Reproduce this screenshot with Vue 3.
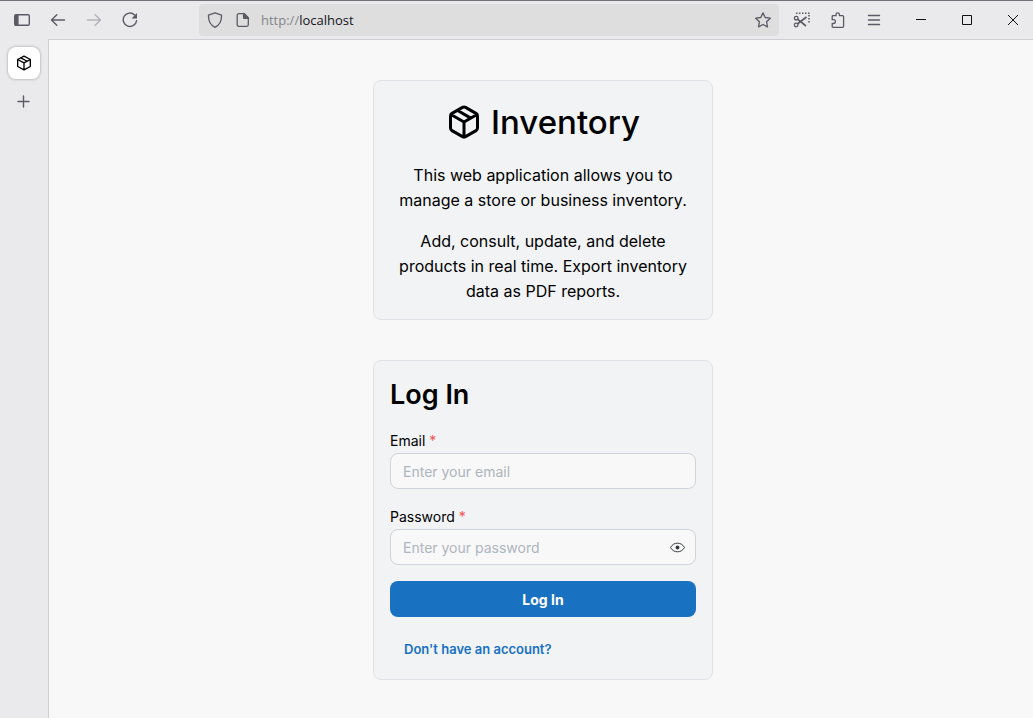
<script setup>
import { ref } from 'vue'

const email = ref('')
const password = ref('')
const showPassword = ref(false)
</script>

<template>
  <div class="browser">
    <header class="toolbar">
      <nav class="nav" aria-label="Navigation">
        <button type="button" class="tool" aria-label="Sidebar">
          <svg width="16" height="16" viewBox="0 0 16 16" fill="none" stroke="currentColor" stroke-width="1.4">
            <rect x=".7" y="2.7" width="14.6" height="10.6" rx="1.2" />
            <path d="M1 3h3.600v10H1z" fill="currentColor" stroke="none" />
          </svg>
        </button>
        <button type="button" class="tool" aria-label="Back">
          <svg width="16" height="16" viewBox="0 0 16 16" fill="none" stroke="currentColor" stroke-width="1.4" stroke-linecap="round" stroke-linejoin="round">
            <path d="M14.5 8h-13M6.8 2.7 1.5 8l5.3 5.3" />
          </svg>
        </button>
        <button type="button" class="tool" aria-label="Forward" disabled>
          <svg width="16" height="16" viewBox="0 0 16 16" fill="none" stroke="currentColor" stroke-width="1.4" stroke-linecap="round" stroke-linejoin="round">
            <path d="M1.5 8h13M9.2 2.7 14.5 8l-5.3 5.3" />
          </svg>
        </button>
        <button type="button" class="tool" aria-label="Reload">
          <svg width="16" height="16" viewBox="0 0 16 16" fill="none" stroke="currentColor" stroke-width="1.4" stroke-linecap="round">
            <path d="M14.6 8.6A6.7 6.7 0 1 1 12.6 2.9" />
            <path d="M15 1v5.500H9.500z" fill="currentColor" stroke="none" />
          </svg>
        </button>
      </nav>

      <div class="address">
        <svg width="16" height="16" viewBox="0 0 16 16" fill="none" stroke="currentColor" stroke-width="1.3" stroke-linejoin="round">
          <path d="M8 .8 1.5 3.200C1.300 8.500 3 12.800 8 15.300c5-2.500 6.700-6.800 6.500-12.100z" />
        </svg>
        <svg class="page-icon" width="16" height="16" viewBox="0 0 16 16" fill="none" stroke="currentColor" stroke-width="1.3" stroke-linejoin="round">
          <path d="M3.700 1.700h5.600l4 4v7.100a1.500 1.500 0 0 1-1.500 1.500H3.700a1.500 1.500 0 0 1-1.500-1.500V3.200a1.500 1.500 0 0 1 1.500-1.500z" />
          <path d="M8.600 1.500v4.800h4.900z" fill="currentColor" />
        </svg>
        <span class="url"><span class="scheme">http://</span>localhost</span>
        <button type="button" class="star" aria-label="Bookmark">
          <svg width="16" height="16" viewBox="0 0 16 16" fill="none" stroke="currentColor" stroke-width="1.3" stroke-linejoin="round">
            <path d="m8 .9 2.200 4.600 5.100.7-3.700 3.600.9 5.100L8 12.500l-4.500 2.400.9-5.100L.7 6.200l5.100-.7z" />
          </svg>
        </button>
      </div>

      <div class="extras">
        <button type="button" class="tool" aria-label="Screenshot">
          <svg width="18" height="16" viewBox="0 0 18 16" fill="none" stroke="currentColor" stroke-width="1.3">
            <path d="M3 1.200h13.500" stroke-width="1.6" stroke-dasharray="1.5 1.5" />
            <path d="M16 3v9" stroke-width="1.6" stroke-dasharray="1.5 1.5" />
            <circle cx="3.2" cy="6.2" r="1.8" />
            <circle cx="3.2" cy="13" r="1.8" />
            <path d="M4.600 7.200 13 14M4.600 11.800 13.500 5" stroke-width="1.7" />
          </svg>
        </button>
        <button type="button" class="tool" aria-label="Extensions">
          <svg width="16" height="16" viewBox="0 0 16 16" fill="none" stroke="currentColor" stroke-width="1.3" stroke-linejoin="round">
            <path d="M2.200 6V4.500a.8.800 0 0 1 .8-.8h3V2.500a1.700 1.700 0 0 1 3.400 0v1.200h3.200a1 1 0 0 1 1 1v9.600a1 1 0 0 1-1 1H3a.8.800 0 0 1-.8-.8v-3h1.300a1.900 1.900 0 0 0 0-3.800H2.200z" />
          </svg>
        </button>
        <button type="button" class="tool" aria-label="Menu">
          <svg width="16" height="16" viewBox="0 0 16 16" stroke="currentColor" stroke-width="1.4" stroke-linecap="round">
            <path d="M2.500 3.500h11M2.500 8h11M2.500 12.500h11" />
          </svg>
        </button>
      </div>

      <div class="window-controls">
        <button type="button" aria-label="Minimize">
          <svg width="12" height="12" viewBox="0 0 12 12" stroke="currentColor"><path d="M1 5.500h10" /></svg>
        </button>
        <button type="button" aria-label="Maximize">
          <svg width="12" height="12" viewBox="0 0 12 12" fill="none" stroke="currentColor"><path d="M1.500 1.500h9v9h-9z" /></svg>
        </button>
        <button type="button" aria-label="Close">
          <svg width="12" height="12" viewBox="0 0 12 12" stroke="currentColor"><path d="m1 1 10 10M11 1 1 11" /></svg>
        </button>
      </div>
    </header>

    <div class="body">
      <aside class="sidebar">
        <button type="button" class="tab" aria-label="Inventory">
          <svg width="16" height="16" viewBox="0 0 24 24" fill="none" stroke="currentColor" stroke-width="2" stroke-linecap="round" stroke-linejoin="round">
            <path d="M12 1.700 21.500 6.800v10.400L12 22.300l-9.500-5.100V6.800zM2.500 6.800l9.500 5.100 9.500-5.100M12 11.900v10.400M7.200 4.200l9.600 5.200" />
          </svg>
        </button>
        <button type="button" class="new-tab" aria-label="New tab">
          <svg width="16" height="16" viewBox="0 0 16 16" stroke="currentColor" stroke-width="1.4" stroke-linecap="round">
            <path d="M7.500 2v11M2 7.500h11" />
          </svg>
        </button>
      </aside>

      <main class="page">
        <section class="card intro">
          <h1>
            <svg width="36" height="36" viewBox="0 0 24 24" fill="none" stroke="currentColor" stroke-width="2" stroke-linecap="round" stroke-linejoin="round">
              <path d="m16.500 9.400-9-5.190M21 16V8a2 2 0 0 0-1-1.730l-7-4a2 2 0 0 0-2 0l-7 4A2 2 0 0 0 3 8v8a2 2 0 0 0 1 1.730l7 4a2 2 0 0 0 2 0l7-4A2 2 0 0 0 21 16zM3.270 6.960 12 12.010l8.730-5.050M12 22.080V12" />
            </svg>
            Inventory
          </h1>
          <p>This web application allows you to manage a store or business inventory.</p>
          <p>Add, consult, update, and delete products in real time. Export inventory data as PDF reports.</p>
        </section>

        <form class="card login" @submit.prevent>
          <h2>Log In</h2>
          <div class="field">
            <label for="email">Email <span class="required">*</span></label>
            <div class="control">
              <input id="email" v-model="email" type="email" placeholder="Enter your email" />
            </div>
          </div>
          <div class="field">
            <label for="password">Password <span class="required">*</span></label>
            <div class="control">
              <input id="password" v-model="password" :type="showPassword ? 'text' : 'password'" placeholder="Enter your password" />
              <button type="button" class="eye" aria-label="Show password" @click="showPassword = !showPassword">
                <svg width="15" height="15" viewBox="0 0 15 15" fill="none" stroke="currentColor">
                  <path d="M.5 7.500C2.200 4.600 4.500 3.200 7.500 3.200s5.300 1.400 7 4.300c-1.700 2.900-4 4.300-7 4.300S2.200 10.400.5 7.500z" />
                  <circle cx="7.5" cy="7.5" r="1.9" fill="currentColor" stroke="none" />
                </svg>
              </button>
            </div>
          </div>
          <button type="submit" class="submit">Log In</button>
          <a href="#" class="signup">Don't have an account?</a>
        </form>
      </main>
    </div>
  </div>
</template>

<style>
body {
  margin: 0;
}
</style>

<style scoped>
.browser {
  display: flex;
  flex-direction: column;
  min-height: 100vh;
  box-sizing: border-box;
  border-top: 1px solid #737177;
  background: #eaeaed;
  color: #000;
  font-family: Inter, "Liberation Sans", sans-serif;
}

button {
  display: flex;
  align-items: center;
  justify-content: center;
  padding: 0;
  border: 0;
  background: none;
  color: inherit;
  font: inherit;
}

svg {
  display: block;
  flex: none;
}

.toolbar {
  display: flex;
  align-items: center;
  height: 38px;
  color: #5b5b66;
}

.nav {
  display: flex;
  width: 199px;
  padding-left: 4px;
  box-sizing: border-box;
}

.tool {
  width: 36px;
  height: 32px;
}

.tool:disabled {
  color: #b2b2b8;
}

.address {
  display: flex;
  flex: 1;
  align-items: center;
  height: 32px;
  padding: 0 8px;
  border-radius: 4px;
  background: #dededf;
}

.page-icon {
  margin-left: 12px;
}

.url {
  flex: 1;
  margin-left: 10px;
  color: #15141a;
  font: 13px/20px "Open Sans", "Noto Sans", sans-serif;
}

.scheme {
  color: #85858a;
}

.extras {
  display: flex;
  padding: 0 6px 0 5px;
}

.window-controls {
  display: flex;
  color: #111;
}

.window-controls button {
  width: 46px;
  height: 38px;
}

.window-controls button:last-child {
  margin-right: -3px;
}

.body {
  display: flex;
  flex: 1;
}

.sidebar {
  display: flex;
  flex-direction: column;
  align-items: center;
  gap: 7px;
  width: 48px;
  padding-top: 8px;
  color: #5b5b66;
}

.tab,
.new-tab {
  width: 32px;
  height: 32px;
}

.tab {
  border-radius: 8px;
  background: #fff;
  box-shadow: 0 0 3px rgba(0, 0, 0, 0.35);
  color: #000;
}

.page {
  display: flex;
  flex: 1;
  flex-direction: column;
  align-items: center;
  gap: 40px;
  padding: 40px 0 36px 4px;
  border-top: 1px solid #cfcfd3;
  border-left: 1px solid #cfcfd3;
  background: #f8f8f8;
}

.card {
  width: 340px;
  max-width: 100%;
  padding: 16px;
  box-sizing: border-box;
  border: 1px solid #dee2e6;
  border-radius: 8px;
  background: #f1f3f5;
}

.intro {
  padding-bottom: 15px;
  text-align: center;
}

h1,
h2,
p {
  margin: 0;
}

h1 {
  display: flex;
  align-items: center;
  justify-content: center;
  gap: 9px;
  margin-bottom: 16px;
  font-size: 33px;
  font-weight: 500;
  line-height: 50px;
}

p {
  font-size: 16px;
  line-height: 25px;
}

p + p {
  margin-top: 16px;
}

.login {
  display: flex;
  flex-direction: column;
}

h2 {
  margin-bottom: 16px;
  font-size: 27px;
  font-weight: 600;
  line-height: 36px;
}

.field {
  margin-bottom: 16px;
}

label {
  display: block;
  font-size: 14px;
  line-height: 24px;
}

.required {
  color: #fa5252;
}

.control {
  position: relative;
}

input {
  display: block;
  width: 100%;
  height: 36px;
  padding: 0 12px;
  box-sizing: border-box;
  border: 1px solid #ced4da;
  border-radius: 8px;
  background: #f8f8f8;
  color: #000;
  font: 14px/20px Inter, "Liberation Sans", sans-serif;
}

input::placeholder {
  color: #adb5bd;
  opacity: 1;
}

.eye {
  position: absolute;
  top: 4px;
  right: 5px;
  width: 28px;
  height: 28px;
  color: #343a40;
}

.submit {
  height: 36px;
  border-radius: 8px;
  background: #1971c2;
  color: #fff;
  font-size: 14px;
  font-weight: 700;
}

.signup {
  align-self: flex-start;
  margin: 22px 14px 4px;
  color: #1971c2;
  font-size: 13px;
  font-weight: 600;
  line-height: 20px;
  text-decoration: none;
}
</style>
